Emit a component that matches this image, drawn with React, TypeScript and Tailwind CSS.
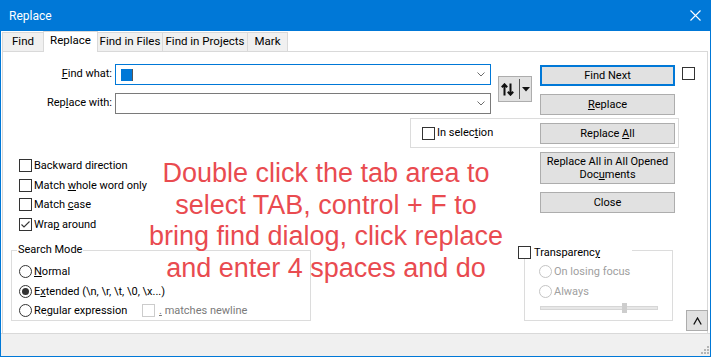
import type { ReactNode } from "react";

const tabs = [
    { label: "Find", w: "w-[42px]" },
    { label: "Replace", w: "w-[55px]", active: true },
    { label: "Find in Files", w: "w-[66px]" },
    { label: "Find in Projects", w: "w-[86px]" },
    { label: "Mark", w: "w-[41px]" },
];

function CheckBox({ checked, disabled }: { checked?: boolean; disabled?: boolean }) {
    return (
        <span
            className={`relative flex size-[13px] shrink-0 items-center justify-center border bg-white ${disabled ? "border-[#cccccc]" : "border-[#333333]"}`}
        >
            {checked && (
                <svg width="11" height="11" viewBox="0 0 11 11" fill="none">
                    <path d="M1.5 5.5 L4 8 L9.5 2.5" stroke="#333" strokeWidth="1.1" />
                </svg>
            )}
        </span>
    );
}

function Radio({ checked, disabled }: { checked?: boolean; disabled?: boolean }) {
    return (
        <span
            className={`flex size-[13px] shrink-0 items-center justify-center rounded-full border bg-white ${disabled ? "border-[#c4c4c4]" : "border-[#333333]"}`}
        >
            {checked && <span className="size-[7px] rounded-full bg-[#333333]" />}
        </span>
    );
}

function Btn({ children, className = "" }: { children: ReactNode; className?: string }) {
    return (
        <div
            className={`flex w-[135px] shrink-0 items-center justify-center whitespace-nowrap border border-[#adadad] bg-[#e1e1e1] text-center leading-[13px] ${className}`}
        >
            {children}
        </div>
    );
}

function Combo({ focused }: { focused?: boolean }) {
    return (
        <div
            className={`ml-[3px] flex h-[21px] w-[376px] items-center border bg-white pl-[5px] pr-[5px] ${focused ? "border-[#0078d7]" : "border-[#7a7a7a]"}`}
        >
            <div className="flex-1">
                {focused && <span className="block h-[12px] w-[12px] border-r border-[#555] bg-[#0078d7]" />}
            </div>
            <svg width="8" height="5" viewBox="0 0 8 5" fill="none">
                <path d="M0.5 0.5 L4 4 L7.5 0.5" stroke="#6d6d6d" strokeWidth="1" />
            </svg>
        </div>
    );
}

function Row({ children }: { children: ReactNode }) {
    return <div className="flex h-[13px] items-center gap-[2px] whitespace-nowrap leading-[13px]">{children}</div>;
}

export default function App() {
    return (
        <div className="relative flex h-[357px] w-[711px] flex-col overflow-hidden border-x border-b border-[#0078d7] bg-white font-['Roboto',sans-serif] text-[11px] text-black">
            {/* Title bar */}
            <div className="flex h-[31px] shrink-0 items-center justify-between bg-[#0078d7] pl-[8px] pr-[9px] text-white">
                <span className="text-[12px]">Replace</span>
                <svg width="11" height="11" viewBox="0 0 11 11" fill="none">
                    <path d="M0.5 0.5 L10.5 10.5 M10.5 0.5 L0.5 10.5" stroke="#fff" strokeWidth="1.1" />
                </svg>
            </div>

            {/* Tabs */}
            <div className="relative z-10 flex h-[20px] shrink-0 items-end pl-[1px] text-[11.5px]">
                {tabs.map((t, i) => (
                    <div
                        key={t.label}
                        className={`flex items-center justify-center whitespace-nowrap border-x border-t border-[#d9d9d9] ${t.w} ${i > 0 ? "-ml-px" : ""} ${t.active ? "-mb-px h-[21px] bg-white pb-[2px]" : "h-[19px] bg-[#f0f0f0]"}`}
                    >
                        {t.label}
                    </div>
                ))}
            </div>

            {/* Panel */}
            <div className="relative ml-[1px] h-[282px] w-[706px] shrink-0 border-x border-t border-[#d9d9d9]">
                <div className="mt-[12px] flex items-start">
                    <div className="flex flex-col gap-[8px]">
                        <div className="flex items-center">
                            <span className="w-[109px] whitespace-nowrap text-right">
                                <u>F</u>ind what:
                            </span>
                            <Combo focused />
                        </div>
                        <div className="flex items-center">
                            <span className="w-[109px] whitespace-nowrap text-right">
                                Rep<u>l</u>ace with:
                            </span>
                            <Combo />
                        </div>
                    </div>

                    <div className="ml-[7px] mt-[12px] flex h-[26px] w-[34px] items-center border border-[#adadad] bg-[#e1e1e1] pl-[2px]">
                        <svg width="13" height="13" viewBox="0 0 13 13" fill="none">
                            <path d="M3.5 12.5 V1.5 M0.8 4.2 L3.5 1.3 L6.2 4.2" stroke="#111" strokeWidth="2" />
                            <path d="M9.5 0.5 V11.5 M6.8 8.8 L9.5 11.7 L12.2 8.8" stroke="#111" strokeWidth="2" />
                        </svg>
                        <span className="ml-[5px] h-[20px] w-px bg-[#555]" />
                        <svg className="ml-[2px]" width="8" height="5" viewBox="0 0 8 5">
                            <path d="M0 0 H8 L4 4.5 Z" fill="#111" />
                        </svg>
                    </div>

                    <div className="ml-[8px] mt-[1px] flex flex-col gap-[8px]">
                        <Btn className="h-[21px] border-2 !border-[#0078d7]">Find Next</Btn>
                        <Btn className="h-[21px]">
                            <span>
                                <u>R</u>eplace
                            </span>
                        </Btn>
                    </div>

                    <div className="ml-[7px] mt-[3px]">
                        <CheckBox />
                    </div>
                </div>

                {/* In selection */}
                <div className="ml-[407px] mt-[3px] flex h-[30px] w-[269px] items-center border border-[#dcdcdc]">
                    <div className="ml-[11px] flex items-center gap-[2px] whitespace-nowrap">
                        <CheckBox />
                        <span>
                            In selec<u>t</u>ion
                        </span>
                    </div>
                    <Btn className="ml-auto mr-[3px] h-[21px]">
                        <span>
                            Replace <u>A</u>ll
                        </span>
                    </Btn>
                </div>

                {/* Options + lower buttons */}
                <div className="flex items-start">
                    <div className="ml-[16px] mt-[11px] flex w-[521px] flex-col gap-[6.5px]">
                        <Row>
                            <CheckBox />
                            <span>Backward direction</span>
                        </Row>
                        <Row>
                            <CheckBox />
                            <span>
                                Match <u>w</u>hole word only
                            </span>
                        </Row>
                        <Row>
                            <CheckBox />
                            <span>
                                Match <u>c</u>ase
                            </span>
                        </Row>
                        <Row>
                            <CheckBox checked />
                            <span>
                                Wra<u>p</u> around
                            </span>
                        </Row>
                    </div>
                    <div className="mt-[4px] flex flex-col gap-[8px]">
                        <Btn className="h-[32px] px-[6px]">
                            <span>
                                Replace All in All Opened
                                <br />
                                Doc<u>u</u>ments
                            </span>
                        </Btn>
                        <Btn className="h-[21px]">Close</Btn>
                    </div>
                </div>

                {/* Group boxes */}
                <div className="mt-[19.5px] flex items-start">
                    <div className="relative ml-[8px] h-[71px] w-[300px] border border-[#dcdcdc]">
                        <span className="absolute left-[5px] top-[-9px] whitespace-nowrap bg-white px-[1px] leading-[16px]">Search Mode</span>
                        <div className="flex flex-col gap-[6.5px] pl-[7px] pt-[14px]">
                            <Row>
                                <Radio />
                                <span>
                                    <u>N</u>ormal
                                </span>
                            </Row>
                            <Row>
                                <Radio checked />
                                <span>
                                    E<u>x</u>tended (\n, \r, \t, \0, \x...)
                                </span>
                            </Row>
                            <Row>
                                <Radio />
                                <span className="w-[106px]">
                                    Re<u>g</u>ular expression
                                </span>
                                <CheckBox disabled />
                                <span className="ml-[2px] text-[#7a7a7a]">
                                    <u>.</u> matches newline
                                </span>
                            </Row>
                        </div>
                    </div>

                    <div className="relative ml-[213px] h-[71px] w-[149px] border border-[#dcdcdc]">
                        <div className="absolute left-[-7px] top-[-5px] flex h-[13px] w-[114px] items-center gap-[3px] whitespace-nowrap bg-white leading-[13px]">
                            <CheckBox />
                            <span>
                                Transparenc<u>y</u>
                            </span>
                        </div>
                        <div className="flex flex-col gap-[6.5px] pl-[14px] pt-[14px] text-[#a0a0a0]">
                            <Row>
                                <Radio disabled />
                                <span>On losing focus</span>
                            </Row>
                            <Row>
                                <Radio disabled />
                                <span>Always</span>
                            </Row>
                        </div>
                        <div className="relative ml-[15px] mt-[5.5px] flex h-[10px] w-[118px] items-center">
                            <div className="h-[4px] w-full border border-[#d6d6d6] bg-[#e7e7e7]" />
                            <div className="absolute left-[82px] top-0 h-[10px] w-[5px] bg-[#cdcdcd]" />
                        </div>
                    </div>
                </div>

                <div className="absolute bottom-[2px] right-[-1px] flex h-[21px] w-[22px] items-center justify-center border border-[#adadad] bg-[#e1e1e1]">
                    <svg width="9" height="8" viewBox="0 0 9 8" fill="none">
                        <path d="M0.8 7.5 L4.5 1 L8.2 7.5" stroke="#111" strokeWidth="1.3" />
                    </svg>
                </div>
            </div>

            {/* Bottom strip */}
            <div className="flex flex-1 items-end justify-end border-t border-[#d9d9d9] bg-[#f0f0f0] pb-[2px] pr-[1px]">
                <svg width="9" height="9" viewBox="0 0 9 9">
                    <rect x="7" y="1" width="2" height="2" fill="#b5b5b5" />
                    <rect x="4" y="4" width="2" height="2" fill="#b5b5b5" />
                    <rect x="7" y="4" width="2" height="2" fill="#b5b5b5" />
                    <rect x="1" y="7" width="2" height="2" fill="#b5b5b5" />
                    <rect x="4" y="7" width="2" height="2" fill="#b5b5b5" />
                    <rect x="7" y="7" width="2" height="2" fill="#b5b5b5" />
                </svg>
            </div>

            {/* Annotation overlay */}
            <div className="pointer-events-none absolute left-[125px] top-[158px] w-[400px] text-center font-['Liberation_Sans',Arial,sans-serif] text-[27px] leading-[31.7px] text-[#e94b50]">
                Double click the tab area to
                <br />
                select TAB, control + F to
                <br />
                bring find dialog, click replace
                <br />
                and enter 4 spaces and do
            </div>
        </div>
    );
}
